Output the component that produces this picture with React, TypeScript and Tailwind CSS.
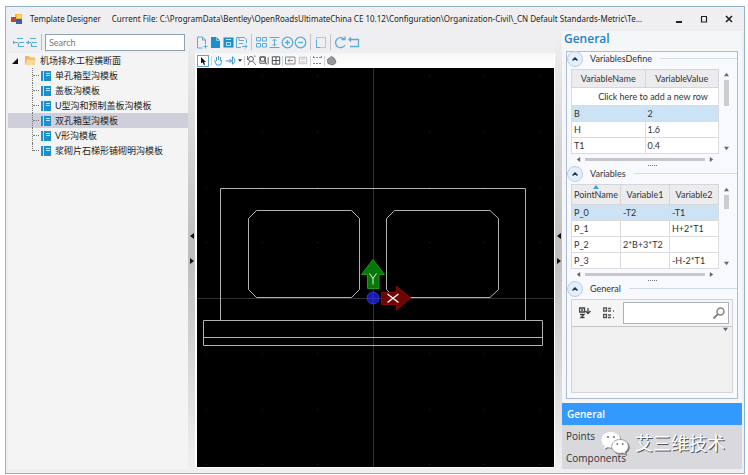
import React from 'react';

const FILE_PATH =
  'C:\\ProgramData\\Bentley\\OpenRoadsUltimateChina CE 10.12\\Configuration\\Organization-Civil\\_CN Default Standards-Metric\\Te...';

const templates = ['单孔箱型沟模板', '盖板沟模板', 'U型沟和预制盖板沟模板', '双孔箱型沟模板', 'V形沟模板', '浆砌片石梯形铺砌明沟模板'];

type IconProps = { label: string; width?: string; children: React.ReactNode };

function ToolButton({ label, width = 'w-[13px]', children }: IconProps) {
  return (
    <button type="button" aria-label={label} className={`${width} flex h-[13px] shrink-0 items-center justify-center text-[#5aacd8]`}>
      <svg viewBox="0 0 13 13" className="h-full w-full" fill="none" stroke="currentColor">
        {children}
      </svg>
    </button>
  );
}

function Separator({ tall = false }: { tall?: boolean }) {
  return <span className={tall ? 'mx-[3px] h-4 w-px bg-[#c9bfc6]' : 'h-2.5 w-px bg-[#c8d4dc]'} />;
}

function TitleBar() {
  return (
    <header className="flex h-6 items-center pl-[3px] pr-[6px] font-['Noto_Sans',sans-serif] text-[8px] text-[#222]">
      <svg viewBox="0 0 12 11" className="mr-[7px] h-[11px] w-3 shrink-0">
        <rect x="4" y="0" width="7" height="7" fill="#f4b83c" />
        <rect x="0" y="3" width="5" height="5" fill="#c8432c" />
        <rect x="5" y="5" width="6" height="5" fill="#3b5fae" />
        <rect x="6" y="1" width="4" height="3" fill="#fbd878" />
      </svg>
      <h1 className="mr-[11px] shrink-0 whitespace-nowrap">Template Designer</h1>
      <p className="min-w-0 flex-1 overflow-hidden whitespace-nowrap">Current File: {FILE_PATH}</p>
      <div className="flex shrink-0 gap-[11px]">
        {['Minimize', 'Maximize', 'Close'].map((name) => (
          <button key={name} type="button" aria-label={name} className="flex h-4 w-[14px] items-center justify-center">
            <svg viewBox="0 0 8 8" className="h-2 w-2" fill="none" stroke="#222">
              {name === 'Minimize' && <path d="M1 7h6" strokeWidth="2" />}
              {name === 'Maximize' && <path d="M1 1.500h6M1.500 2v5h5V2" strokeWidth="1.200" />}
              {name === 'Close' && <path d="M1 1l6 6M7 1L1 7" strokeWidth="1.600" />}
            </svg>
          </button>
        ))}
      </div>
    </header>
  );
}

function TreePanel() {
  return (
    <section className="flex w-[180px] shrink-0 flex-col">
      <div className="flex h-[22px] items-center pl-[4px]">
        <ToolButton label="Expand all">
          <path d="M1 6.500h5M5 2.500h6M7 6.500h5M6 10.500h6M6.500 7v3.500" strokeWidth="1.200" />
          <path d="M1 4.500v4l2.500-2z" fill="currentColor" stroke="none" />
        </ToolButton>
        <ToolButton label="Collapse all">
          <path d="M1 6.500h5M5 2.500h6M7 6.500h5M6 10.500h6M6.500 7v3.500" strokeWidth="1.200" />
          <path d="M4 4.500v4L1 6.500z" fill="currentColor" stroke="none" />
        </ToolButton>
        <span className="mx-[3px] h-4 w-px bg-[#bbb]" />
        <input
          type="text"
          aria-label="Search templates"
          placeholder="Search"
          className="mr-[3px] h-[17px] min-w-0 flex-1 border border-[#8ea3b0] bg-white px-[3px] text-[9px] outline-none placeholder:text-[#777]"
        />
      </div>
      <ul className="flex-1 bg-[#f4f4f4] text-[9px] text-[#222]">
        <li>
          <div className="flex h-[15px] items-center pl-[4px]">
            <svg viewBox="0 0 6 6" className="mr-[7px] h-[6px] w-[6px]">
              <path d="M6 0v6H0z" fill="#111" />
            </svg>
            <svg viewBox="0 0 11 9" className="mr-1 h-[9px] w-[11px]">
              <path d="M0 0h4l1 1.500h5V9H0z" fill="#efb95b" />
              <path d="M2 3.500h9L9.500 9H0z" fill="#fbd895" />
            </svg>
            机场排水工程横断面
          </div>
          <ul>
            {templates.map((name, i) => (
              <li key={name} className={`flex h-[15px] items-center pl-6 ${i === 3 ? 'bg-[#cfcfdb]' : ''}`}>
                <span className={`w-px self-start border-l border-dotted border-[#777] ${i === 5 ? 'h-2' : 'h-[15px]'}`} />
                <span className="mr-[2px] w-[6px] border-t border-dotted border-[#777]" />
                <svg viewBox="0 0 10 10" className="mr-1 h-[10px] w-[10px]">
                  <rect width="10" height="10" fill="#1d8fcb" />
                  <path d="M2.500 0v10M5 2.500h4M5 4.500h4" stroke="#bfe3f6" />
                </svg>
                {name}
              </li>
            ))}
          </ul>
        </li>
      </ul>
    </section>
  );
}

function Splitter() {
  return (
    <div className="flex w-[7px] shrink-0 flex-col items-center justify-center bg-linear-to-b from-[#f0f0f0] via-[#bdbdbd] to-[#f0f0f0]">
      <svg viewBox="0 0 4 31" className="mb-1 h-[31px] w-1" fill="#111">
        <path d="M4 0v6L0 3zM0 25v6l4-3z" />
      </svg>
    </div>
  );
}

const gridX = [206, 262, 317, 373, 429, 484, 540];
const gridY = [76, 132, 187, 242, 298, 353, 409, 464];

function TemplateCanvas() {
  return (
    <svg viewBox="197 68 357 399" className="min-h-0 w-full flex-1 bg-black" fill="none" role="img" aria-label="Template cross section">
      {gridY.map((y) => gridX.map((x) => <rect key={`${x}-${y}`} x={x} y={y} width="1" height="1" fill="#252525" />))}
      <path d="M373.500 68V467M197 298.500H554" stroke="#303030" />
      <g stroke="#b2b2b2">
        <path d="M220.500 320V188.500H525.500V320" />
        <path d="M203.500 320.500H542.500V345.500H203.500zM203.500 337.500H542.500" />
        <path d="M256.500 210.500H351.500L359.500 218.500V289.500L351.500 297.500H256.500L248.500 289.500V218.500z" />
        <path d="M394.500 210.500H490L498.500 218.500V289.500L490 297.500H394.500L386.500 289.500V218.500z" />
      </g>
      <path d="M373 259.500L384.500 274.500H379V288.500H367.500V274.500H361.500z" fill="#067806" stroke="#159a15" />
      <path d="M369.500 273.500l3.500 5 3.500-5M373 278.500v6" stroke="#eee" />
      <path d="M381.500 292.500H396.500V286L411 298L396.500 310V304.500H381.500z" fill="#6d0505" stroke="#9d1010" strokeWidth=".7" />
      <path d="M387.500 294l11 8.500M398.500 294l-11 8.500" stroke="#fff" strokeWidth="1.300" />
      <circle cx="373" cy="298" r="6" fill="#1818b4" stroke="#3434cf" />
      <path d="M367 298.500h12M373 292v12" stroke="#3a3ac8" strokeWidth=".7" />
    </svg>
  );
}

function Workspace() {
  return (
    <section className="mb-px flex min-w-0 flex-1 flex-col">
      <div className="flex h-[22px] items-center pl-px">
        <ToolButton label="New"><path d="M6.500 12H1.500v-11h5l3 3v4M6.500 1v3h3M7.500 10.500h4M9.500 8.500v4" /></ToolButton>
        <ToolButton label="Open"><path d="M2 1h5.500L11 4.500V12H2z" fill="#1d8fcb" stroke="none" /><path d="M7.500 1v3.500H11" stroke="#8bc6e6" /></ToolButton>
        <ToolButton label="Save"><path d="M1.500 1.500h10v10h-10z" fill="#1d8fcb" stroke="none" /><path d="M4 3.500h5M4.500 6.500h4v3h-4z" stroke="#c6e5f5" /></ToolButton>
        <ToolButton label="Save as"><path d="M6 11.500H1.500v-10h8l2 2V7M4 1.500v3h5M4 7.500h4M7 10.500h5l-2-2m2 2l-2 2" /></ToolButton>
        <Separator tall />
        <ToolButton label="Fit view"><path d="M1.500 1.500h4v3.500h-4zM7.500 1.500h4v3.500h-4zM1.500 7.500h4v3.500h-4zM7.500 7.500h4v3.500h-4z" /></ToolButton>
        <ToolButton label="Exaggeration"><path d="M1.500 1.500h10M1.500 11.500h10M6.500 3v7M4.500 5l2-2 2 2M4.500 8l2 2 2-2" /></ToolButton>
        <ToolButton label="Zoom in"><circle cx="6.500" cy="6.500" r="5.300" strokeWidth="1.300" /><path d="M4 6.500h5M6.500 4v5" strokeWidth="1.300" /></ToolButton>
        <ToolButton label="Zoom out"><circle cx="6.500" cy="6.500" r="5.300" strokeWidth="1.300" /><path d="M4 6.500h5" strokeWidth="1.300" /></ToolButton>
        <Separator tall />
        <ToolButton label="Window area"><path d="M2.500 1.500h9v10h-9z" strokeDasharray="1 1" /><path d="M2.500 4v7.500H6" /></ToolButton>
        <Separator tall />
        <ToolButton label="Redo"><path d="M10.500 3.500A5 5 0 1 0 11 9M7.500 3.500h3.500V.5" strokeWidth="1.300" /></ToolButton>
        <ToolButton label="Undo"><path d="M2 3.500h9.500v7H3M4 1.500l-2 2 2 2" strokeWidth="1.300" /></ToolButton>
      </div>
      <div className="flex min-h-0 flex-1 flex-col border-b border-l-2 border-r border-white">
        <div className="flex h-[15px] items-center bg-linear-to-b from-[#f6f6f6] to-white">
          <button type="button" aria-label="Select" className="mr-[2px] flex h-3 w-3 shrink-0 items-center justify-center border border-[#63a5cc] bg-white">
            <svg viewBox="0 0 6 8" className="h-2 w-[6px]"><path d="M1 0v6.500l1.500-1.300L4 8l1-.5L4 5h2z" fill="#111" /></svg>
          </button>
          <Separator />
          <ToolButton label="Pan"><path d="M2.500 6l2 5h4L10 6M4.500 7V3M6.500 6V2M8.500 7V3" stroke="#4a9fd0" /></ToolButton>
          <ToolButton label="Rotate" width="w-3"><path d="M1 7h6M5 5l2 2-2 2M8 2.500c3.500 2 3.500 6 0 8M8 2.500v8" stroke="#238cc5" /></ToolButton>
          <svg viewBox="0 0 5 3" className="mx-px h-[3px] w-1"><path d="M0 0h5L2.500 3z" fill="#333" /></svg>
          <span className="w-px" />
          <Separator />
          <ToolButton label="Zoom to element"><circle cx="6" cy="5" r="2.500" stroke="#666" /><path d="M5 7l-2 4M7.500 7l3.500 4M2.500 2v4M10 3V1.500" stroke="#777" /></ToolButton>
          <ToolButton label="Zoom to area" width="w-3"><circle cx="5" cy="5" r="2.500" stroke="#444" /><path d="M2 2.500h6v7H2zM7 7l3 4M11 3v7" stroke="#555" /></ToolButton>
          <ToolButton label="Tile" width="w-3"><path d="M2.500 2.500h8v8h-8zM2.500 6.500h8M6.500 2.500v8" stroke="#444" /></ToolButton>
          <Separator />
          <span className="w-px" />
          <ToolButton label="View previous"><path d="M1.500 3h9.500v7h-9.500zM4 6.500h5M6 4.500l-2 2 2 2" stroke="#888" /></ToolButton>
          <ToolButton label="View next" width="w-3"><path d="M2.500 3h8v7h-8zM4 5h5M4 8h5" stroke="#bbb" /></ToolButton>
          <span className="w-px" />
          <Separator />
          <ToolButton label="Measure"><path d="M2 3.500h9M2 9.500h9M2.500 2v3M10.500 2v3" stroke="#888" strokeDasharray="2 1" /></ToolButton>
          <Separator />
          <ToolButton label="Display settings"><path d="M2.500 5.500l4-3 3 2 1.500 4-3 2.500-5-1.500z" fill="#999" stroke="#777" /></ToolButton>
        </div>
        <TemplateCanvas />
      </div>
    </section>
  );
}

function GroupHeader({ title }: { title: string }) {
  return (
    <div className="flex h-[13px] items-center">
      <button type="button" aria-label={`Collapse ${title}`} className="mr-[7px] flex h-4 w-4 shrink-0 items-center justify-center rounded-full border border-[#b7cee7] bg-[#e5effb]">
        <svg viewBox="0 0 6 4" className="h-1 w-[6px]" fill="none" stroke="#1d345e" strokeWidth="1.500"><path d="M.5 3.500L3 1l2.500 2.500" /></svg>
      </button>
      <h3 className="mr-2 text-[9px] text-[#333]">{title}</h3>
      <span className="h-px flex-1 bg-[#cfdced]" />
    </div>
  );
}

function Arrow({ direction }: { direction: 'up' | 'down' | 'left' | 'right' }) {
  const shapes = { up: 'M0 5h6L3 1z', down: 'M0 1h6L3 5z', left: 'M5 0v6L1 3z', right: 'M1 0v6l4-3z' };
  return <svg viewBox="0 0 6 6" className="h-[5px] w-[5px]" fill="#666"><path d={shapes[direction]} /></svg>;
}

function ScrollArea({ children, thumb }: { children: React.ReactNode; thumb: string }) {
  return (
    <div className="px-1 pt-1">
      <div className="flex">
        <div className="min-w-0 flex-1">{children}</div>
        <div className="flex w-[14px] flex-col items-center py-[3px]">
          <Arrow direction="up" />
          <span className={`mt-[3px] w-[5px] bg-[#ccc] ${thumb}`} />
          <span className="flex-1" />
          <Arrow direction="down" />
        </div>
      </div>
      <div className="mr-[14px] flex h-[10px] items-center gap-1 px-[5px]">
        <Arrow direction="left" />
        <span className="h-[3px] flex-1 bg-[#c6c6cb]" />
        <Arrow direction="right" />
      </div>
    </div>
  );
}

function DataTable({ columns, rows, addRow = false, sorted = false }: { columns: string[]; rows: string[][]; addRow?: boolean; sorted?: boolean }) {
  return (
    <table className="w-full table-fixed border-collapse bg-white text-[9px] leading-3 text-[#333]">
      <thead>
        <tr className={sorted ? 'h-5' : 'h-[18px]'}>
          {columns.map((name, i) => (
            <th key={name} scope="col" className="relative whitespace-nowrap border border-[#d6d6da] bg-[#ececef] p-0 text-center font-normal">
              {sorted && i === 0 && (
                <svg viewBox="0 0 6 4" className="absolute inset-x-0 top-0 mx-auto h-1 w-[6px]"><path d="M0 4h6L3 0z" fill="#3ba0da" /></svg>
              )}
              {name}
            </th>
          ))}
        </tr>
      </thead>
      <tbody>
        {addRow && (
          <tr className="h-[18px]">
            <td colSpan={columns.length} className="border border-[#dcdce0] p-0 pl-4 text-center">Click here to add a new row</td>
          </tr>
        )}
        {rows.map((row, r) => (
          <tr key={row[0]} className={`h-4 ${r === 0 ? 'bg-[#cbe3f4]' : ''}`}>
            {row.map((value, c) => (
              <td key={c} className="whitespace-nowrap border border-[#dcdce0] p-0 pl-[2px]">{value}</td>
            ))}
          </tr>
        ))}
      </tbody>
    </table>
  );
}

function Grip() {
  return <div className="mx-auto mb-px mt-px h-px w-[9px] border-t border-dotted border-[#777]" />;
}

function Properties() {
  return (
    <div className="mx-1 flex flex-1 flex-col border border-[#aebbd0] bg-[#f8f9fc]">
      <GroupHeader title="VariablesDefine" />
      <ScrollArea thumb="h-[26px]">
        <DataTable addRow columns={['VariableName', 'VariableValue']} rows={[['B', '2'], ['H', '1.6'], ['T1', '0.4']]} />
      </ScrollArea>
      <Grip />
      <GroupHeader title="Variables" />
      <ScrollArea thumb="h-[14px]">
        <DataTable
          sorted
          columns={['PointName', 'Variable1', 'Variable2']}
          rows={[['P_0', '-T2', '-T1'], ['P_1', '', 'H+2*T1'], ['P_2', '2*B+3*T2', ''], ['P_3', '', '-H-2*T1']]}
        />
      </ScrollArea>
      <Grip />
      <GroupHeader title="General" />
      <div className="mx-1 mb-[5px] mt-1 flex flex-1 flex-col border border-[#d4d4d8] bg-[#f0f0f0]">
        <div className="flex h-[27px] items-center border-b border-[#c4c4c8] bg-[#f5f5f6] pl-[7px] pr-[3px]">
          <button type="button" aria-label="Sort alphabetically" className="mr-3 h-3 w-3">
            <svg viewBox="0 0 12 12" fill="none" stroke="#444"><path d="M.5 1h5v4h-5zM2 3h2M1 7.500h4L2 10.500h3.500M9 1v5M6.500 4L9 6.500 11.500 4" strokeWidth="1.300" /></svg>
          </button>
          <button type="button" aria-label="Categorize" className="mr-2 h-3 w-3">
            <svg viewBox="0 0 12 12" fill="none" stroke="#555"><path d="M.5 1h3v3h-3zM5 1.500h3M5 4h3M10 4h1M.5 7.500h3v3h-3zM5 8h3M5 10.500h3M10 10.500h1" strokeWidth="1.300" /></svg>
          </button>
          <div className="flex h-[22px] min-w-0 flex-1 items-center border border-[#adb2b8] bg-white pr-[3px]">
            <input type="text" aria-label="Search properties" className="h-full min-w-0 flex-1 bg-transparent px-1 text-[9px] outline-none" />
            <svg viewBox="0 0 12 12" className="h-3 w-3" fill="none" stroke="#858585" strokeWidth="1.500"><circle cx="7.500" cy="4.500" r="3.500" /><path d="M5 7L.5 11.500" strokeWidth="2" /></svg>
          </div>
        </div>
        <div className="flex justify-end pr-1"><Arrow direction="down" /></div>
      </div>
    </div>
  );
}

function WatermarkLogo() {
  return (
    <svg viewBox="0 0 28 24" className="h-6 w-7 shrink-0 drop-shadow-[1px_1px_0_#777]">
      <path d="M10 1C4.500 1 .5 4.500 .5 9c0 2.500 1.200 4.700 3.300 6.200L3 18l3.400-1.700c1.200.3 2.400.5 3.600.5 5.500 0 9.500-3.500 9.500-7.800S15.500 1 10 1z" fill="#fff" />
      <path d="M19 8.500c-4.700 0-8.300 3-8.300 6.900s3.600 6.900 8.300 6.900c1 0 2-.2 2.900-.4l2.800 1.500-.7-2.400c2-1.300 3.300-3.300 3.300-5.600 0-3.900-3.600-6.900-8.300-6.900z" fill="#fff" stroke="#8b8b90" strokeWidth=".8" />
      <g fill="#777"><circle cx="7" cy="6" r="1.100" /><circle cx="13" cy="6" r="1.100" /><circle cx="16.300" cy="13" r=".9" /><circle cx="21.700" cy="13" r=".9" /></g>
    </svg>
  );
}

function SidePanel() {
  return (
    <aside className="flex w-[180px] shrink-0 flex-col">
      <div className="flex flex-1 flex-col bg-[#f5f6f8] pb-1">
        <h2 className="h-5 pl-[2px] font-['Open_Sans',sans-serif] text-[12px] font-semibold leading-4 text-[#2482c5]">General</h2>
        <Properties />
      </div>
      <nav className="relative flex flex-col bg-[#d8d8dd] font-['Open_Sans','Noto_Sans_CJK_SC',sans-serif] text-[10px] text-[#333]">
        <button type="button" className="h-[22px] bg-[#3399ff] pl-[5px] text-left font-semibold text-white">General</button>
        <button type="button" className="h-[22px] pl-1 text-left">Points</button>
        <button type="button" className="h-[22px] pl-1 text-left">Components</button>
        <div className="pointer-events-none absolute bottom-[14px] right-[17px] flex items-center gap-[6px]">
          <WatermarkLogo />
          <span className="whitespace-nowrap text-[18px] leading-6 text-white [text-shadow:1px_1px_0_#555]">艾三维技术</span>
        </div>
      </nav>
    </aside>
  );
}

export default function App() {
  return (
    <main className="flex min-h-screen flex-col bg-white pb-[2px] pl-[5px] pr-[3px] pt-[6px] font-['Lato','Noto_Sans_CJK_SC',sans-serif]">
      <div className="flex flex-1 flex-col border border-[#8db4cf] bg-[#efeff1] pb-[4px] pl-[2px] pr-[2px]">
        <TitleBar />
        <div className="flex flex-1">
          <TreePanel />
          <Splitter />
          <Workspace />
          <Splitter />
          <SidePanel />
        </div>
      </div>
    </main>
  );
}
